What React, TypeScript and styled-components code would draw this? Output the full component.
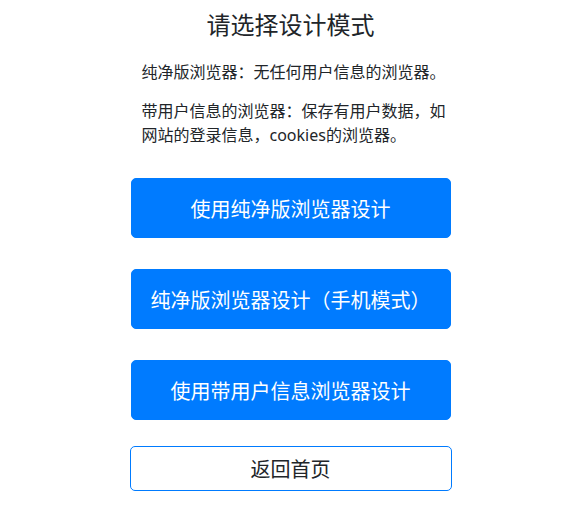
import React from "react";
import styled, { createGlobalStyle } from "styled-components";

const GlobalStyle = createGlobalStyle`
  html, body {
    margin: 0;
    padding: 0;
    background: #fff;
  }
  body {
    font-family: "Noto Sans", "Noto Sans CJK SC", sans-serif;
    color: #212529;
  }
`;

const Page = styled.div`
  display: flex;
  flex-direction: column;
  align-items: center;
  padding-top: 10px;
`;

const Panel = styled.div`
  width: 320px;
  display: flex;
  flex-direction: column;
`;

const Title = styled.h2`
  margin: 0 0 20px;
  font-size: 24px;
  font-weight: 400;
  line-height: 30px;
  text-align: center;
`;

const Note = styled.p`
  margin: 0 0 15px;
  padding: 0 4px 0 11px;
  font-size: 16px;
  line-height: 24px;
`;

const Actions = styled.div`
  display: flex;
  flex-direction: column;
  align-items: center;
  gap: 31px;
  margin-top: 16px;
`;

const Button = styled.button<{ $outline?: boolean }>`
  width: ${(p) => (p.$outline ? "322px" : "320px")};
  height: ${(p) => (p.$outline ? "45px" : "60px")};
  margin-top: ${(p) => (p.$outline ? "-5px" : "0")};
  border: 1px solid #007bff;
  border-radius: 5px;
  background: ${(p) => (p.$outline ? "#fff" : "#007bff")};
  color: ${(p) => (p.$outline ? "#212529" : "#fff")};
  font-family: "Noto Sans", "Noto Sans CJK SC", sans-serif;
  font-size: 20px;
  cursor: pointer;
  padding: 0;
`;

function App() {
  return (
    <>
      <GlobalStyle />
      <Page>
        <Panel>
          <Title>请选择设计模式</Title>
          <Note>纯净版浏览器：无任何用户信息的浏览器。</Note>
          <Note>带用户信息的浏览器：保存有用户数据，如网站的登录信息，cookies的浏览器。</Note>
          <Actions>
            <Button>使用纯净版浏览器设计</Button>
            <Button>纯净版浏览器设计（手机模式）</Button>
            <Button>使用带用户信息浏览器设计</Button>
            <Button $outline>返回首页</Button>
          </Actions>
        </Panel>
      </Page>
    </>
  );
}

export default App;
